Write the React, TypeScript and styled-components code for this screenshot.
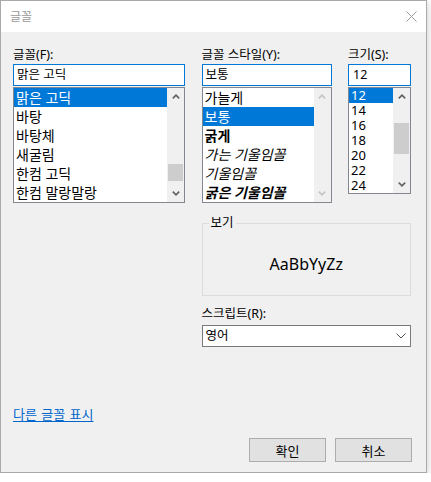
import styled, { createGlobalStyle } from "styled-components";

const GlobalStyle = createGlobalStyle`
  html, body {
    margin: 0;
    padding: 0;
    background: #fff;
  }
  body {
    font-family: "Noto Sans", "Noto Sans CJK KR", sans-serif;
    font-size: 12.5px;
    color: #000;
  }
`;

const Window = styled.div`
  display: flex;
  flex-direction: column;
  width: 427px;
  height: 473px;
  box-sizing: border-box;
  border: 1px solid #aaa;
  background: #f0f0f0;
  box-shadow: 0 2px 9px rgba(0, 0, 0, 0.22);
`;

const TitleBar = styled.div`
  display: flex;
  align-items: center;
  justify-content: space-between;
  height: 31px;
  padding: 0 9px 0 9px;
  background: #fff;
  flex-shrink: 0;
`;

const Title = styled.span`
  color: #999;
  font-size: 12px;
  line-height: 16px;
`;

const Body = styled.div`
  display: flex;
  flex-direction: column;
  flex: 1;
  padding: 15px 15px 10px 12px;
`;

const MainGrid = styled.div`
  display: grid;
  grid-template-columns: 172px 130px 63px;
  justify-content: space-between;
`;

const Column = styled.div`
  display: flex;
  flex-direction: column;
`;

const FieldLabel = styled.div`
  height: 16px;
  margin-bottom: 1px;
  line-height: 16px;
  white-space: nowrap;
`;

const TextBox = styled.div<{ $indent?: number }>`
  height: 22px;
  box-sizing: border-box;
  padding: 0 0 0 ${(p) => p.$indent ?? 3}px;
  border: 1px solid #0078d7;
  background: #fff;
  font-size: 12.5px;
  line-height: 20px;
  white-space: nowrap;
`;

const ListBox = styled.div<{ $height: number }>`
  display: flex;
  height: ${(p) => p.$height}px;
  margin-top: 1px;
  box-sizing: border-box;
  border: 1px solid #828790;
  background: #fff;
`;

const ListItems = styled.div`
  display: flex;
  flex-direction: column;
  flex: 1;
  min-width: 0;
`;

const ListItem = styled.div<{
  $row: number;
  $size: number;
  $selected?: boolean;
  $bold?: boolean;
  $italic?: boolean;
}>`
  height: ${(p) => p.$row}px;
  padding-left: 2px;
  font-size: ${(p) => p.$size}px;
  line-height: ${(p) => p.$row}px;
  font-weight: ${(p) => (p.$bold ? 700 : 400)};
  font-style: ${(p) => (p.$italic ? "italic" : "normal")};
  white-space: nowrap;
  background: ${(p) => (p.$selected ? "#0078d7" : "transparent")};
  color: ${(p) => (p.$selected ? "#fff" : "#000")};
`;

const ScrollBar = styled.div`
  display: flex;
  flex-direction: column;
  width: 17px;
  flex-shrink: 0;
  background: #f0f0f0;
`;

const ScrollButton = styled.div<{ $disabled?: boolean }>`
  display: flex;
  align-items: center;
  justify-content: center;
  height: 17px;
  flex-shrink: 0;
  color: ${(p) => (p.$disabled ? "#c4c4c4" : "#606060")};
`;

const Track = styled.div`
  flex: 1;
  padding: 0 1px;
`;

const Thumb = styled.div<{ $offset: number; $size: number }>`
  height: ${(p) => p.$size}px;
  margin-top: ${(p) => p.$offset}px;
  background: #cdcdcd;
`;

const SidePanel = styled.div`
  grid-column: 2 / 4;
  display: flex;
  flex-direction: column;
  padding-top: 20px;
`;

const PreviewBox = styled.div`
  position: relative;
  display: flex;
  align-items: center;
  justify-content: center;
  height: 73px;
  box-sizing: border-box;
  padding-top: 9px;
  border: 1px solid #dcdcdc;
`;

const PreviewLegend = styled.span`
  position: absolute;
  top: -9px;
  left: 6px;
  padding: 0 2px;
  background: #f0f0f0;
  line-height: 16px;
`;

const PreviewText = styled.span`
  font-size: 16px;
  line-height: 16px;
`;

const ScriptLabel = styled(FieldLabel)`
  margin: 10px 0 3px;
`;

const Select = styled.div`
  display: flex;
  align-items: center;
  justify-content: space-between;
  height: 22px;
  box-sizing: border-box;
  padding: 0 4px 0 3px;
  border: 1px solid #7a7a7a;
  background: #fff;
  line-height: 20px;
  color: #000;
`;

const Footer = styled.div`
  display: flex;
  flex-direction: column;
  margin-top: auto;
`;

const Link = styled.a`
  align-self: flex-start;
  color: #0066cc;
  font-size: 13px;
  line-height: 16px;
  word-spacing: 1px;
  text-decoration: underline;
  text-underline-offset: 2px;
  cursor: pointer;
`;

const ButtonRow = styled.div`
  display: flex;
  justify-content: flex-end;
  gap: 9px;
  margin: 16px -1px 0 0;
`;

const Button = styled.button`
  width: 77px;
  height: 24px;
  padding: 0;
  border: 1px solid #adadad;
  background: #e1e1e1;
  font-family: inherit;
  font-size: 13px;
  color: #000;
`;

const Chevron = ({ up }: { up?: boolean }) => (
  <svg width="8" height="5" viewBox="0 0 8 5">
    <path
      d={up ? "M0.8 4.4 L4 1.2 L7.2 4.4" : "M0.8 0.6 L4 3.8 L7.2 0.6"}
      fill="none"
      stroke="currentColor"
      strokeWidth="1.6"
    />
  </svg>
);

type Scroll = { offset: number; size: number } | null;

const ScrollPart = ({ thumb, disabled }: { thumb: Scroll; disabled?: boolean }) => (
  <ScrollBar>
    <ScrollButton $disabled={disabled}>
      <Chevron up />
    </ScrollButton>
    <Track>{thumb && <Thumb $offset={thumb.offset} $size={thumb.size} />}</Track>
    <ScrollButton $disabled={disabled}>
      <Chevron />
    </ScrollButton>
  </ScrollBar>
);

const fonts = ["맑은 고딕", "바탕", "바탕체", "새굴림", "한컴 고딕", "한컴 말랑말랑"];

const styles = [
  { name: "가늘게" },
  { name: "보통", selected: true },
  { name: "굵게", bold: true },
  { name: "가는 기울임꼴", italic: true },
  { name: "기울임꼴", italic: true },
  { name: "굵은 기울임꼴", bold: true, italic: true },
];

const sizes = ["12", "14", "16", "18", "20", "22", "24"];

export default function App() {
  return (
    <>
      <GlobalStyle />
      <Window>
        <TitleBar>
          <Title>글꼴</Title>
          <svg width="11" height="11" viewBox="0 0 11 11">
            <path d="M0.5 0.5 L10.5 10.5 M10.5 0.5 L0.5 10.5" stroke="#999" strokeWidth="1" />
          </svg>
        </TitleBar>
        <Body>
          <MainGrid>
            <Column>
              <FieldLabel>글꼴(F):</FieldLabel>
              <TextBox>맑은 고딕</TextBox>
              <ListBox $height={116}>
                <ListItems>
                  {fonts.map((f, i) => (
                    <ListItem key={f} $row={19} $size={14} $selected={i === 0}>
                      {f}
                    </ListItem>
                  ))}
                </ListItems>
                <ScrollPart thumb={{ offset: 59, size: 17 }} />
              </ListBox>
            </Column>
            <Column>
              <FieldLabel>글꼴 스타일(Y):</FieldLabel>
              <TextBox>보통</TextBox>
              <ListBox $height={116}>
                <ListItems>
                  {styles.map((s) => (
                    <ListItem
                      key={s.name}
                      $row={19}
                      $size={14}
                      $selected={s.selected}
                      $bold={s.bold}
                      $italic={s.italic}
                    >
                      {s.name}
                    </ListItem>
                  ))}
                </ListItems>
                <ScrollPart thumb={null} disabled />
              </ListBox>
            </Column>
            <Column>
              <FieldLabel>크기(S):</FieldLabel>
              <TextBox $indent={4}>12</TextBox>
              <ListBox $height={107}>
                <ListItems>
                  {sizes.map((s, i) => (
                    <ListItem key={s} $row={15} $size={13} $selected={i === 0}>
                      {s}
                    </ListItem>
                  ))}
                </ListItems>
                <ScrollPart thumb={{ offset: 18, size: 31 }} />
              </ListBox>
            </Column>
            <SidePanel>
              <PreviewBox>
                <PreviewLegend>보기</PreviewLegend>
                <PreviewText>AaBbYyZz</PreviewText>
              </PreviewBox>
              <ScriptLabel>스크립트(R):</ScriptLabel>
              <Select>
                <span>영어</span>
                <svg width="10" height="6" viewBox="0 0 10 6">
                  <path d="M0.5 0.5 L5 5 L9.5 0.5" fill="none" stroke="#505050" strokeWidth="1" />
                </svg>
              </Select>
            </SidePanel>
          </MainGrid>
          <Footer>
            <Link>다른 글꼴 표시</Link>
            <ButtonRow>
              <Button>확인</Button>
              <Button>취소</Button>
            </ButtonRow>
          </Footer>
        </Body>
      </Window>
    </>
  );
}
